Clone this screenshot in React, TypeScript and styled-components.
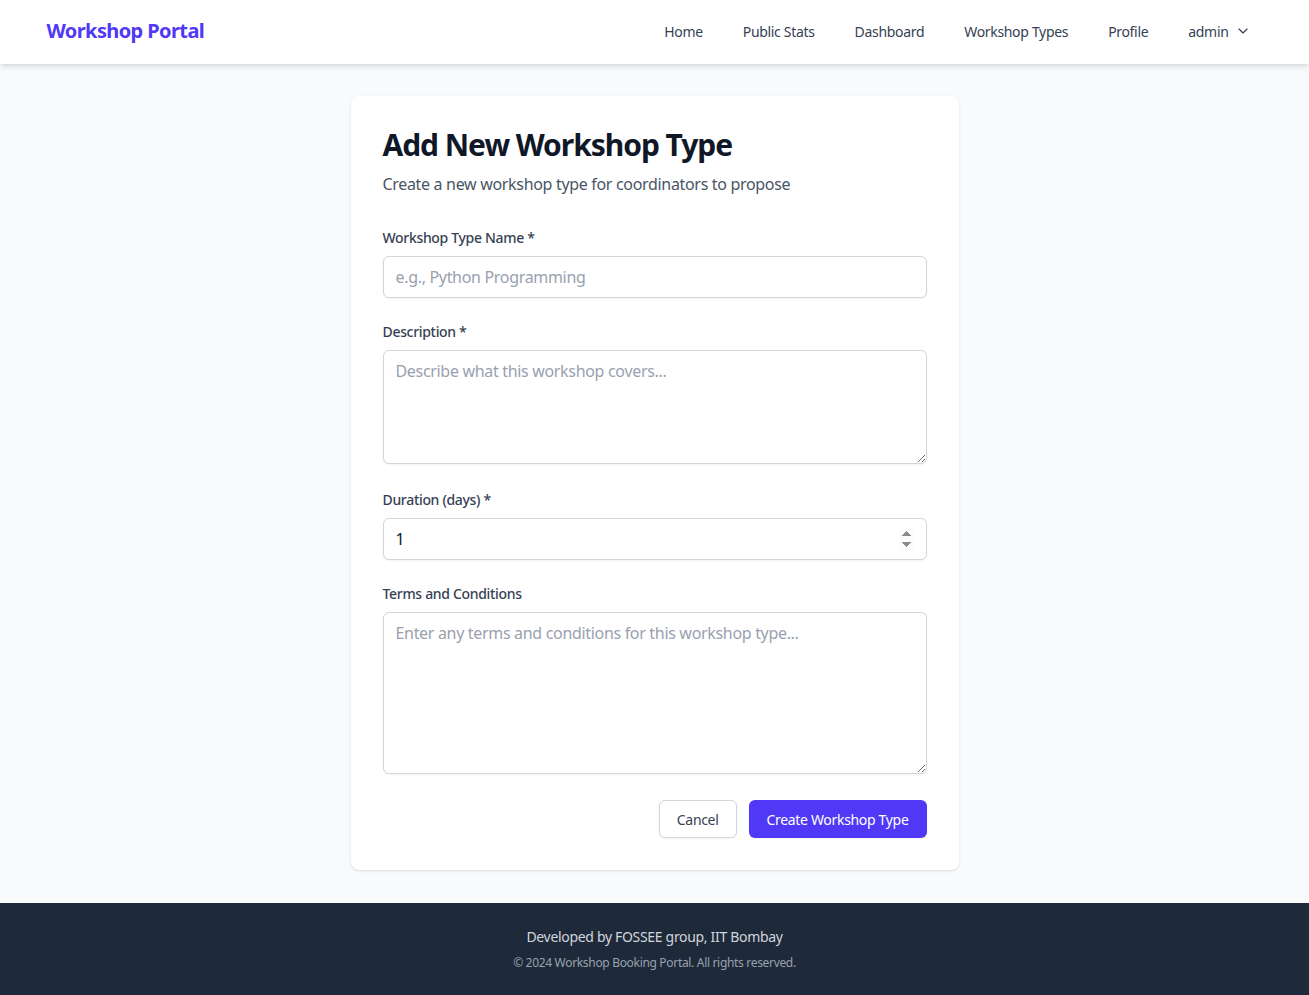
import React, { useState } from 'react'
import styled, { createGlobalStyle } from 'styled-components'
import { ChevronDown } from 'lucide-react'

const GlobalStyle = createGlobalStyle`
  * {
    box-sizing: border-box;
  }
  body {
    margin: 0;
    background-color: #F9FAFB;
    font-family: "Noto Sans", "Open Sans", sans-serif;
    letter-spacing: -0.02em;
    color: #101828;
  }
`

const Page = styled.div`
  min-height: 100vh;
  display: flex;
  flex-direction: column;
`

const NavBar = styled.nav`
  background-color: #FFFFFF;
  box-shadow: 0 4px 6px -1px rgba(0, 0, 0, 0.1), 0 2px 4px -2px rgba(0, 0, 0, 0.1);
  position: relative;
  z-index: 1;
`

const NavInner = styled.div`
  max-width: 1280px;
  margin: 0 auto;
  padding: 0 32px;
  height: 64px;
  display: flex;
  align-items: center;
  justify-content: space-between;
`

const Logo = styled.a`
  font-size: 20px;
  line-height: 28px;
  font-weight: 700;
  letter-spacing: -0.03em;
  color: #4F39F6;
  text-decoration: none;
  margin-top: -2px;
`

const NavLinks = styled.div`
  display: flex;
  align-items: center;
  gap: 16px;
  margin-top: -2px;
`

const NavLink = styled.a`
  display: flex;
  align-items: center;
  gap: 6px;
  padding: 8px 12px;
  font-size: 14px;
  font-weight: 400;
  color: #364153;
  text-decoration: none;
  cursor: pointer;
`

const Main = styled.main`
  flex: 1;
  width: 100%;
  max-width: 672px;
  margin: 0 auto;
  padding: 32px;
`

const Card = styled.div`
  background-color: #FFFFFF;
  border-radius: 8px;
  box-shadow: 0 1px 3px 0 rgba(0, 0, 0, 0.1), 0 1px 2px -1px rgba(0, 0, 0, 0.1);
  padding: 32px;
`

const Header = styled.div`
  margin-bottom: 32px;
`

const Title = styled.h1`
  margin: -1px 0 0;
  font-size: 30px;
  line-height: 36px;
  font-weight: 700;
  letter-spacing: -0.035em;
  color: #101828;
`

const Subtitle = styled.p`
  margin: 9px 0 0;
  font-size: 16px;
  line-height: 24px;
  color: #4A5565;
`

const Form = styled.form`
  display: flex;
  flex-direction: column;
  gap: 24px;
`

const Field = styled.div`
  display: flex;
  flex-direction: column;
`

const Label = styled.label`
  font-size: 14px;
  line-height: 20px;
  font-weight: 500;
  color: #364153;
  margin-bottom: 8px;
`

const Input = styled.input`
  width: 100%;
  height: 42px;
  padding: 8px 12px;
  border: 1px solid #D1D5DC;
  border-radius: 6px;
  box-shadow: 0 1px 2px 0 rgba(0, 0, 0, 0.05);
  font-family: inherit;
  letter-spacing: inherit;
  font-size: 16px;
  line-height: 24px;
  color: #101828;
  background: #FFFFFF;
  outline: none;

  &::placeholder {
    color: #99A1AF;
  }

  &::-webkit-inner-spin-button {
    opacity: 1;
  }
`

const TextArea = styled.textarea`
  display: block;
  width: 100%;
  margin-bottom: 2px;
  padding: 8px 12px;
  border: 1px solid #D1D5DC;
  border-radius: 6px;
  box-shadow: 0 1px 2px 0 rgba(0, 0, 0, 0.05);
  font-family: inherit;
  letter-spacing: inherit;
  font-size: 16px;
  line-height: 24px;
  color: #101828;
  background: #FFFFFF;
  outline: none;
  resize: vertical;

  &::placeholder {
    color: #99A1AF;
  }
`

const Actions = styled.div`
  display: flex;
  justify-content: flex-end;
  gap: 12px;
`

const Button = styled.button<{ $primary?: boolean }>`
  height: 38px;
  padding: 0 17px;
  border-radius: 6px;
  font-family: inherit;
  letter-spacing: inherit;
  font-size: 14px;
  font-weight: 400;
  cursor: pointer;
  border: 1px solid ${props => props.$primary ? 'transparent' : '#D1D5DC'};
  background-color: ${props => props.$primary ? '#4F39F6' : '#FFFFFF'};
  color: ${props => props.$primary ? '#FFFFFF' : '#364153'};
  box-shadow: 0 1px 2px 0 rgba(0, 0, 0, 0.05);
`

const Footer = styled.footer`
  background-color: #1E2939;
  padding: 24px 16px;
  text-align: center;
`

const FooterText = styled.p`
  margin: 0;
  font-size: 14px;
  line-height: 20px;
  color: #D1D5DC;
`

const FooterNote = styled.p`
  margin: 8px 0 0;
  font-size: 12px;
  line-height: 16px;
  color: #99A1AF;
`

const navItems = ['Home', 'Public Stats', 'Dashboard', 'Workshop Types', 'Profile']

export default function App() {
  const [name, setName] = useState('')
  const [description, setDescription] = useState('')
  const [duration, setDuration] = useState('1')
  const [terms, setTerms] = useState('')

  return (
    <Page>
      <GlobalStyle />
      <NavBar>
        <NavInner>
          <Logo href="#">Workshop Portal</Logo>
          <NavLinks>
            {navItems.map(item => (
              <NavLink key={item}>{item}</NavLink>
            ))}
            <NavLink>
              admin
              <ChevronDown size={16} strokeWidth={1.75} />
            </NavLink>
          </NavLinks>
        </NavInner>
      </NavBar>

      <Main>
        <Card>
          <Header>
            <Title>Add New Workshop Type</Title>
            <Subtitle>Create a new workshop type for coordinators to propose</Subtitle>
          </Header>
          <Form onSubmit={e => e.preventDefault()}>
            <Field>
              <Label htmlFor="name">Workshop Type Name *</Label>
              <Input id="name" value={name} onChange={e => setName(e.target.value)} placeholder="e.g., Python Programming" />
            </Field>
            <Field>
              <Label htmlFor="description">Description *</Label>
              <TextArea id="description" rows={4} value={description} onChange={e => setDescription(e.target.value)} placeholder="Describe what this workshop covers..." />
            </Field>
            <Field>
              <Label htmlFor="duration">Duration (days) *</Label>
              <Input id="duration" type="number" min={1} value={duration} onChange={e => setDuration(e.target.value)} />
            </Field>
            <Field>
              <Label htmlFor="terms">Terms and Conditions</Label>
              <TextArea id="terms" rows={6} value={terms} onChange={e => setTerms(e.target.value)} placeholder="Enter any terms and conditions for this workshop type..." />
            </Field>
            <Actions>
              <Button type="button">Cancel</Button>
              <Button type="submit" $primary>Create Workshop Type</Button>
            </Actions>
          </Form>
        </Card>
      </Main>

      <Footer>
        <FooterText>Developed by FOSSEE group, IIT Bombay</FooterText>
        <FooterNote>© 2024 Workshop Booking Portal. All rights reserved.</FooterNote>
      </Footer>
    </Page>
  )
}
